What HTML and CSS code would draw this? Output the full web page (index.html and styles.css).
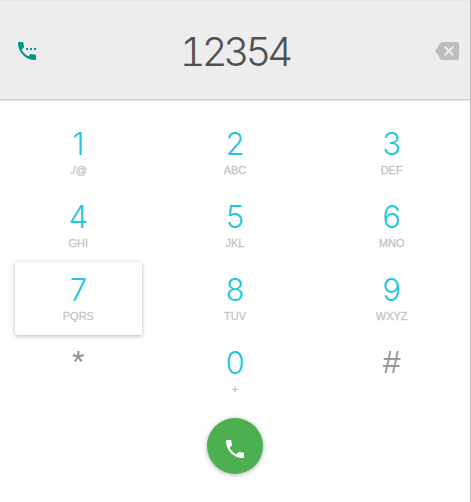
FILE: index.html
```html
<!DOCTYPE html>
<html lang="en">
<head>
<meta charset="utf-8">
<title>Dialer</title>
<link rel="stylesheet" href="styles.css">
</head>
<body>
<main class="dialer">
  <header class="display">
    <svg class="display-icon" viewBox="0 0 24 24" fill="#009688"><path d="M20 15.5c-1.25 0-2.45-.2-3.57-.57-.35-.11-.74-.03-1.02.24l-2.2 2.2c-2.83-1.44-5.15-3.75-6.59-6.58l2.2-2.21c.28-.27.36-.66.25-1.01C8.7 6.45 8.5 5.25 8.5 4c0-.55-.45-1-1-1H4c-.55 0-1 .45-1 1 0 9.39 7.61 17 17 17 .55 0 1-.45 1-1v-3.5c0-.55-.45-1-1-1zM19 9v2h2V9h-2zm-2 0h-2v2h2V9zm-4 0h-2v2h2V9z"/></svg>
    <output class="number">12354</output>
    <svg class="display-icon" viewBox="0 0 24 24" fill="#bdbdbd"><path d="M22 3H7c-.69 0-1.23.35-1.59.88L0 12l5.41 8.11c.36.53.9.89 1.59.89h15c1.1 0 2-.9 2-2V5c0-1.1-.9-2-2-2zm-3 12.59L17.59 17 14 13.41 10.41 17 9 15.59 12.59 12 9 8.41 10.41 7 14 10.59 17.59 7 19 8.41 15.41 12 19 15.59z"/></svg>
  </header>
  <section class="keypad">
    <div class="key"><span class="digit">1</span><span class="letters">./@</span></div>
    <div class="key"><span class="digit">2</span><span class="letters">ABC</span></div>
    <div class="key"><span class="digit">3</span><span class="letters">DEF</span></div>
    <div class="key"><span class="digit">4</span><span class="letters">GHI</span></div>
    <div class="key"><span class="digit">5</span><span class="letters">JKL</span></div>
    <div class="key"><span class="digit">6</span><span class="letters">MNO</span></div>
    <div class="key raised"><span class="digit">7</span><span class="letters">PQRS</span></div>
    <div class="key"><span class="digit">8</span><span class="letters">TUV</span></div>
    <div class="key"><span class="digit">9</span><span class="letters">WXYZ</span></div>
    <div class="key"><span class="digit symbol">*</span></div>
    <div class="key"><span class="digit">0</span><span class="letters">+</span></div>
    <div class="key"><span class="digit symbol">#</span></div>
  </section>
  <button class="call" aria-label="Call">
    <svg class="call-icon" viewBox="0 0 24 24" fill="#fff"><path d="M20 15.5c-1.25 0-2.45-.2-3.57-.57-.35-.11-.74-.03-1.02.24l-2.2 2.2c-2.83-1.44-5.15-3.75-6.59-6.59l2.2-2.2c.28-.27.36-.66.25-1.01C8.7 6.45 8.5 5.25 8.5 4c0-.55-.45-1-1-1H4c-.55 0-1 .45-1 1 0 9.39 7.61 17 17 17 .55 0 1-.45 1-1v-3.5c0-.55-.45-1-1-1z"/></svg>
  </button>
</main>
</body>
</html>
```
FILE: styles.css
```css
* { box-sizing: border-box; }

body {
  margin: 0;
  background: #fff;
  font-family: "Liberation Sans", Arial, sans-serif;
}

.dialer {
  height: 502px;
  border-right: 1px solid #bdbdbd;
  display: flex;
  flex-direction: column;
  align-items: center;
}

.display {
  width: 100%;
  height: 101px;
  padding: 1px 11px 0 15px;
  display: flex;
  align-items: center;
  justify-content: space-between;
  background: #ededed;
  border-top: 1px solid #e6e6e6;
  border-bottom: 1px solid #e6e6e6;
  box-shadow: inset 0 -1px #cecece;
}

.display-icon {
  width: 24px;
  height: 24px;
}

.number {
  padding-top: 2px;
  font-family: Inter, "Liberation Sans", sans-serif;
  font-weight: 300;
  font-size: 40px;
  line-height: 48px;
  font-variant-numeric: tabular-nums;
  letter-spacing: -4px;
  margin-right: 5px;
  color: #505050;
}

.keypad {
  width: 100%;
  margin-top: 15px;
  padding: 0 15px;
  display: grid;
  grid-template-columns: repeat(3, 1fr);
  grid-auto-rows: 73px;
  column-gap: 30px;
}

.key {
  display: flex;
  flex-direction: column;
  align-items: center;
  padding-top: 10px;
  border-radius: 2px;
}

.raised {
  background: #fff;
  box-shadow: 0 1px 4px rgba(0, 0, 0, 0.3);
}

.digit {
  font-family: Inter, "Liberation Sans", sans-serif;
  font-weight: 300;
  font-size: 31px;
  line-height: 36px;
  color: #1fc8dc;
}

.symbol {
  font-family: "Liberation Sans", Arial, sans-serif;
  font-size: 32px;
  line-height: 34px;
  color: #939393;
}

.letters {
  font-size: 11px;
  line-height: 16px;
  color: #c4c4c4;
  -webkit-text-stroke: 0.3px #c4c4c4;
}

.call {
  width: 56px;
  height: 56px;
  margin-top: 10px;
  padding: 5px 0 0;
  border: 0;
  border-radius: 50%;
  display: flex;
  align-items: center;
  justify-content: center;
  background: #4caf50;
  box-shadow: 0 1px 5px rgba(0, 0, 0, 0.3);
}

.call-icon {
  width: 24px;
  height: 24px;
}
```
